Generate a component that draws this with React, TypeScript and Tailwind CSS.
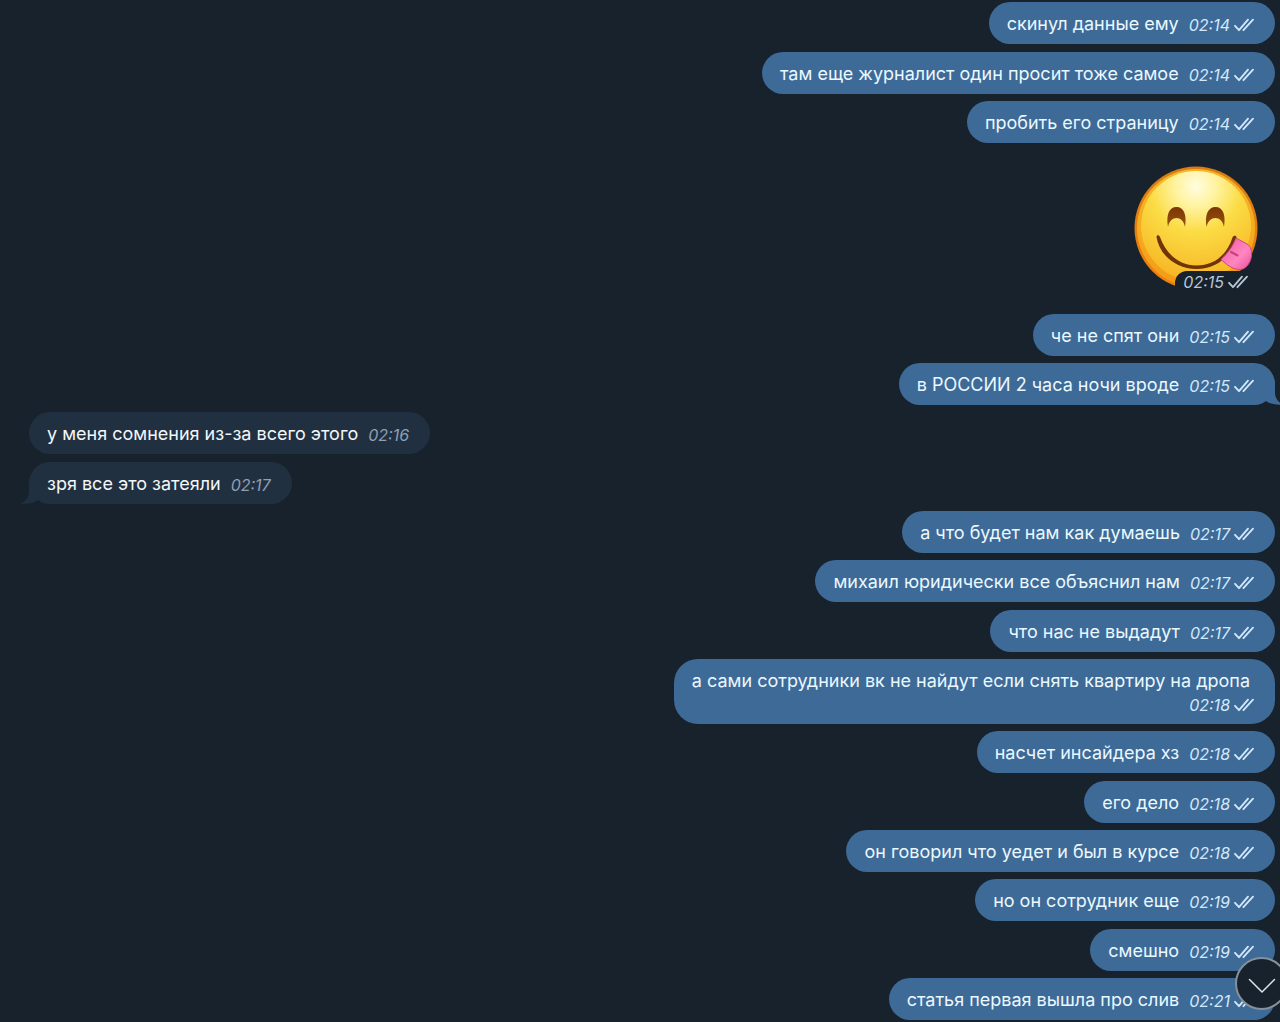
type Message = {
  text?: string;
  time: string;
  incoming?: boolean;
  tail?: boolean;
  stacked?: boolean;
};

const messages: Message[] = [
  { text: "скинул данные ему", time: "02:14" },
  { text: "там еще журналист один просит тоже самое", time: "02:14" },
  { text: "пробить его страницу", time: "02:14" },
  { time: "02:15" },
  { text: "че не спят они", time: "02:15" },
  { text: "в РОССИИ 2 часа ночи вроде", time: "02:15", tail: true },
  { text: "у меня сомнения из-за всего этого", time: "02:16", incoming: true },
  { text: "зря все это затеяли", time: "02:17", incoming: true, tail: true },
  { text: "а что будет нам как думаешь", time: "02:17" },
  { text: "михаил юридически все объяснил нам", time: "02:17" },
  { text: "что нас не выдадут", time: "02:17" },
  { text: "а сами сотрудники вк не найдут если снять квартиру на дропа", time: "02:18", stacked: true },
  { text: "насчет инсайдера хз", time: "02:18" },
  { text: "его дело", time: "02:18" },
  { text: "он говорил что уедет и был в курсе", time: "02:18" },
  { text: "но он сотрудник еще", time: "02:19" },
  { text: "смешно", time: "02:19" },
  { text: "статья первая вышла про слив", time: "02:21" },
];

function Checks() {
  return (
    <svg className="h-4 w-5 shrink-0" viewBox="0 0 20 16" fill="none" stroke="currentColor" strokeWidth="1.8" strokeLinecap="round" strokeLinejoin="round" aria-label="Прочитано">
      <path d="M1 8.800 5 13.200 14 2.600M9.400 13.200 19 2.600" />
    </svg>
  );
}

function Stamp({ time, incoming }: { time: string; incoming?: boolean }) {
  return (
    <span className={incoming ? "mb-0.5 flex shrink-0 items-center gap-1 text-[#8fa0b2]" : "mb-0.5 flex shrink-0 items-center gap-1 text-[#d3e9fb]"}>
      <time className="text-base leading-5 italic">{time}</time>
      {!incoming && <Checks />}
    </span>
  );
}

function Tail({ incoming }: { incoming?: boolean }) {
  return (
    <svg
      className={incoming ? "absolute bottom-0 -left-2 h-6 w-6 -scale-x-100 text-[#213040]" : "absolute -right-2 bottom-0 h-6 w-6 text-[#3e6a98]"}
      viewBox="0 0 24 24"
      fill="currentColor"
      aria-hidden="true"
    >
      <path d="M5 0H16V12C16 17 19 21 24 23.500C18 24.500 11 23 6 19.500Z" />
    </svg>
  );
}

function Yum() {
  return (
    <svg className="h-31 w-31" viewBox="0 0 124 124" role="img" aria-label="Смайлик с языком">
      <defs>
        <linearGradient id="rim" x1="0" y1="0" x2="0" y2="1">
          <stop offset="0" stopColor="#d97b10" />
          <stop offset="1" stopColor="#ee8210" />
        </linearGradient>
        <linearGradient id="edge" x1="0" y1="0" x2="0" y2="1">
          <stop offset="0" stopColor="#f3b52c" />
          <stop offset="0.5" stopColor="#f5ac20" />
          <stop offset="1" stopColor="#f59a15" />
        </linearGradient>
        <radialGradient id="face" cx="0.5" cy="0.14" r="0.92">
          <stop offset="0" stopColor="#fffde0" />
          <stop offset="0.2" stopColor="#fff3a0" />
          <stop offset="0.45" stopColor="#fbdc45" />
          <stop offset="1" stopColor="#f6b01f" />
        </radialGradient>
        <linearGradient id="eye" x1="0" y1="0" x2="0" y2="1">
          <stop offset="0" stopColor="#7c3607" />
          <stop offset="1" stopColor="#97520b" />
        </linearGradient>
        <linearGradient id="tongue" x1="0" y1="0" x2="1" y2="1">
          <stop offset="0" stopColor="#ee5aa0" />
          <stop offset="0.6" stopColor="#ff86c0" />
          <stop offset="1" stopColor="#e8529c" />
        </linearGradient>
      </defs>
      <circle cx="62" cy="62" r="61.5" fill="url(#rim)" />
      <circle cx="62" cy="62" r="59" fill="url(#edge)" />
      <circle cx="62" cy="60" r="55" fill="url(#face)" />
      <path d="M34 61C32 49 35 41 42.500 41C50 41 53 49 51 61C49 49 36 49 34 61Z" fill="url(#eye)" />
      <path d="M72.500 61C70.500 49 74 41 81.500 41C89 41 92 49 90 61C88 49 75 49 72.500 61Z" fill="url(#eye)" />
      <path d="M22.500 71C22.800 68.500 25 69 26 71C32 88 45 99.500 62.500 99.500C80 99.500 93 89 98.500 71.500C99.500 69 103 69.500 102.500 72C97 91 82 103 62.500 103C43 103 25.500 90 22.500 71Z" fill="#713408" />
      <path d="M87 93.500C94 87 99 80 102 72L113 78C117 80.500 118 85 117.500 90C116.500 97 112 103 106.500 103.500C99 104 92 98 87 93.500Z" fill="url(#tongue)" stroke="#d04588" strokeWidth="1" />
      <path d="M97 86 103.500 89.500" stroke="#c83f7c" strokeWidth="2" strokeLinecap="round" fill="none" />
    </svg>
  );
}

function Row({ message }: { message: Message }) {
  const { text, time, incoming, tail, stacked } = message;

  if (!text) {
    return (
      <li className="mt-[23px] mr-[22px] mb-6 flex justify-end">
        <div className="relative">
          <Yum />
          <div className="absolute right-0 -bottom-1 rounded-tl-xl bg-[#18222c] pt-px pr-2.5 pl-2">
            <div className="[&>span]:text-[#b9c8d8]">
              <Stamp time={time} />
            </div>
          </div>
        </div>
      </li>
    );
  }

  return (
    <li className={incoming ? "mt-[7px] flex justify-start nth-[3n+2]:mt-2" : "mt-[7px] flex justify-end first:mt-0 nth-[3n+2]:mt-2"}>
      <div
        className={
          incoming
            ? "relative ml-[29px] rounded-[24px] bg-[#213040] pt-[9px] pr-[21px] pb-[7px] pl-[18px] text-[#f3f7fa]"
            : "relative mr-[5px] rounded-[24px] bg-[#3e6a98] pt-[9px] pr-[21px] pb-[7px] pl-[18px] text-[#eaf8ff]"
        }
      >
        {tail && <Tail incoming={incoming} />}
        <div className={stacked ? "relative flex flex-col items-end gap-px" : "relative flex items-end gap-2.5"}>
          <p className={stacked ? "pr-1 text-lg leading-[26px]" : "text-lg leading-[26px]"}>{text}</p>
          <Stamp time={time} incoming={incoming} />
        </div>
      </div>
    </li>
  );
}

export default function App() {
  return (
    <main className="relative h-screen overflow-hidden bg-[#18222c] font-['Inter','Noto_Sans',sans-serif]">
      <ol className="pt-0.5">
        {messages.map((message, index) => (
          <Row key={index} message={message} />
        ))}
      </ol>
      <button
        type="button"
        aria-label="Прокрутить вниз"
        className="absolute -right-2 bottom-3 flex size-[53px] items-center justify-center rounded-full border-2 border-[#84909c] bg-[#18222c] text-[#dbe3ea]"
      >
        <svg className="mt-1 h-4 w-7" viewBox="0 0 28 16" fill="none" stroke="currentColor" strokeWidth="1.5" strokeLinecap="round" strokeLinejoin="round" aria-hidden="true">
          <path d="M1.500 1.500 14 14 26.500 1.500" />
        </svg>
      </button>
    </main>
  );
}
